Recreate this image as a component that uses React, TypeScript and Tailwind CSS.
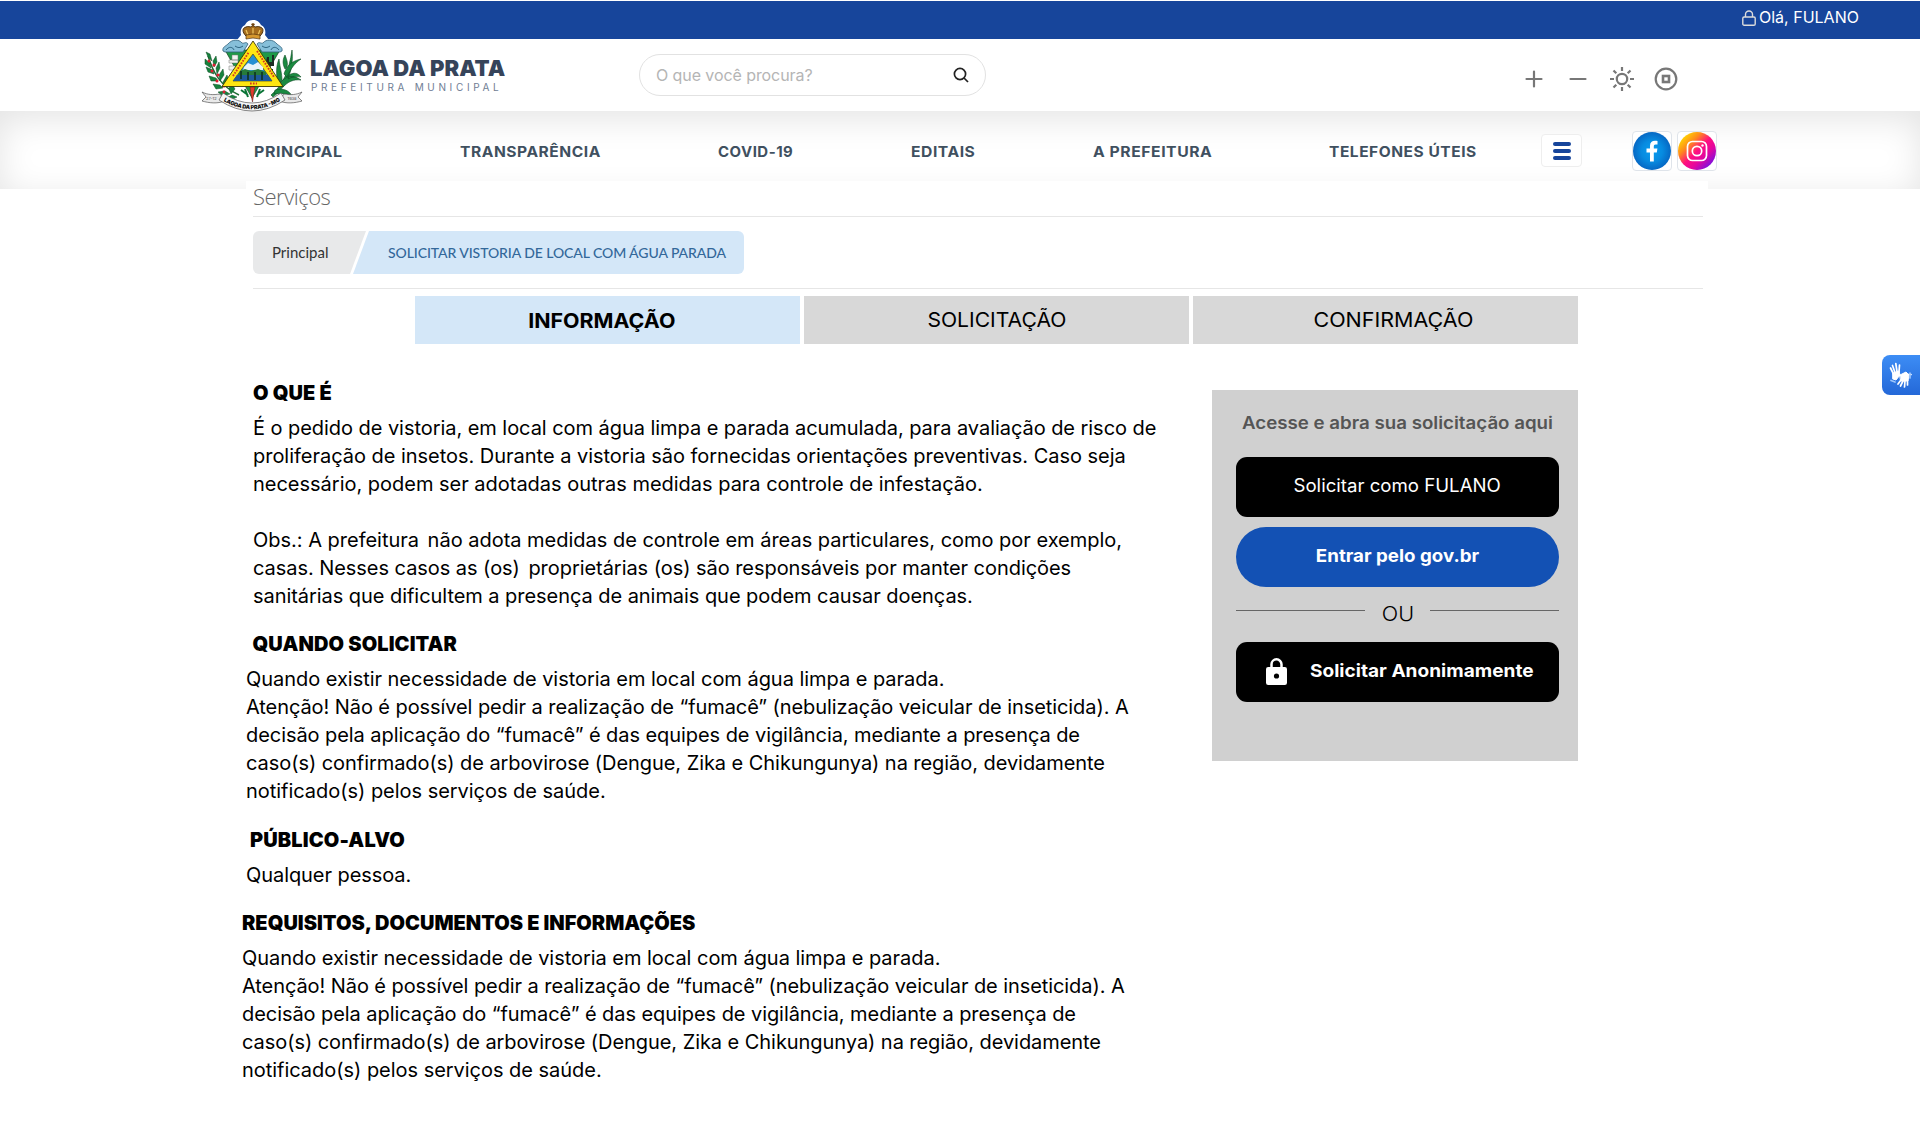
import React from "react";

function Emblem() {
  return (
    <svg viewBox="0 0 102 93" className="h-[93px] w-[102px]" aria-label="Brasão de Lagoa da Prata">
      <path d="M52 1c-5 0-7 3-8 5-4 2-5 6-4 10l-4 5c-5-1-10 1-13 6h58c-3-5-8-7-13-6l-4-5c1-4 0-8-4-10-1-2-3-5-8-5z" fill="#fff" />
      <path d="M24 31h55L51 79z" fill="#1f9a48" stroke="#173b1c" strokeWidth=".7" />
      <path d="M22 32c-1-4 3-5 5-7 4-5 11-5 14-1 2 1 4-2 6 1l-5 8H24z" fill="#86bfd9" stroke="#315f7a" strokeWidth=".8" />
      <path d="M81 32c1-4-3-5-5-7-4-5-11-5-14-1-2 1-4-2-6 1l5 8h18z" fill="#86bfd9" stroke="#315f7a" strokeWidth=".8" />
      <path d="M25 31c3-4 7-3 8 0M70 31c1-3 5-4 8 0M34 27c3 2 5 2 8 0M61 27c3 2 5 2 8 0" fill="none" stroke="#2d6581" />
      <path d="M31 36h6v5h-6zM28 41h9v3h-9zM28 47h8v4h-8z" fill="#f1f4ef" stroke="#777" strokeWidth=".5" />
      <path d="M66 38h2v5h3v-7h2v11h-9zM66 50h6v2h-6z" fill="#1b2c22" />
      <path d="M7 37c5 16 12 30 31 39" fill="none" stroke="#1f6c35" strokeWidth="1.4" />
      <g fill="#16833d" stroke="#0c4a22" strokeWidth=".5">
        <path d="M7 38l-2-5 4 2 2 7zM9 44l-5-4 0 5 6 4zM12 42l3-5 1 6-3 5zM12 51l-7-3 2 5 6 2zM15 49l3-6 1 6-3 6zM15 59l-7-2 2 5 7 0zM18 56l4-6 1 6-4 6zM19 66l-7-1 3 5 7-1zM22 63l4-7 2 7-5 5zM24 72l-7 1 5 4 7-2zM28 70l2-7 4 7-4 5zM31 76l-5 3 6 1 4-2z" />
      </g>
      <g fill="#e01c30"><circle cx="8" cy="42" r="1.500" /><circle cx="13" cy="46" r="1.600" /><circle cx="11" cy="52" r="1.500" /><circle cx="17" cy="56" r="1.600" /><circle cx="16" cy="62" r="1.500" /><circle cx="23" cy="67" r="1.600" /><circle cx="23" cy="73" r="1.400" /></g>
      <g fill="#1a8a40" stroke="#0c4a22" strokeWidth=".6">
        <path d="M70 76c12-10 18-24 21-45 2 18-4 36-19 47z" />
        <path d="M77 66c-2-11-2-19 1-26 1 9 3 15 3 21zM83 55c2-7 7-13 17-15-6 4-10 9-14 18zM78 65c6-8 14-10 22-4-8-1-13 2-18 7zM74 71c8-2 14 0 17 6-6-3-12-3-18-2zM84 50c-3-6-2-10 0-14 2 5 3 8 2 12zM88 56c5-3 9-2 12 2-5-1-9 0-13 2z" />
      </g>
      <path d="M52 22L82 67.500H21z" fill="#fde612" stroke="#3b3506" strokeWidth=".9" />
      <path d="M52 35L71 62H32z" fill="#258fd2" stroke="#4c4413" strokeWidth=".7" />
      <path d="M43 48l4-4 5 2 5-3 5 5v3H42z" fill="#e8f3f8" />
      <path d="M39 52l5-2 6 2 7-2 8 3v3H37z" fill="#267b3b" />
      <path d="M36 56h31l4 6H32z" fill="#1e599a" />
      <path d="M40 52v8M47 53v8M54 53v8M61 53v8" stroke="#103624" strokeWidth="1.700" />
      <g stroke="#d33a1f" strokeWidth="1.900" strokeDasharray="1.700 1.200" fill="none"><path d="M32 57l16-24M56 32l17 26M49 64.500h7" /></g>
      <path d="M49 68h5l-1 5-1.500 10-2-10z" fill="#e23b2e" stroke="#5e1a14" strokeWidth=".5" />
      <path d="M40 71l7 5M63 71l-7 5M44 70l3 8M59 70l-3 8" stroke="#0a7436" strokeWidth="2" />
      <path d="M45 17c-4-4-4-8 0-9 2-1 4 0 5 0 1-2 3-2 4 0 1 0 3-1 5 0 4 1 4 5 0 9z" fill="#a56c1d" stroke="#3d2508" strokeWidth=".9" />
      <path d="M47 16l-2-5M52 16V9M57 16l2-5" stroke="#efc55f" strokeWidth="1.200" />
      <path d="M52 8V4M50.300 5.300h3.400" stroke="#6f4310" strokeWidth="1.200" />
      <path d="M45 16q7-2 14 0v4q-7-2-14 0z" fill="#d6982f" stroke="#51300c" strokeWidth=".7" />
      <path d="M1 73c6 3 11 3 18 2l5 7c-8 3-16 2-23 0l4-4zM101 73c-6 3-11 3-18 2l-5 7c8 3 16 2 23 0l-4-4z" fill="#eaeaea" stroke="#555" strokeWidth=".7" />
      <path d="M22 74Q51 94 80 74L84 81Q51 103 18 81z" fill="#f6f6f6" stroke="#555" strokeWidth=".7" />
      <path id="motto" d="M20 80.500Q51 100 82 80.500" fill="none" />
      <text className="font-['Inter',sans-serif]" fontSize="5.600" fontWeight="900" fill="#111"><textPath href="#motto" startOffset="50%" textAnchor="middle" textLength="60">LAGOA DA PRATA - MG</textPath></text>
      <text x="5" y="80.500" fontSize="4" fill="#444" className="font-['Inter',sans-serif]">27-12</text>
      <text x="86.500" y="80.500" fontSize="4" fill="#444" className="font-['Inter',sans-serif]">1938</text>
    </svg>
  );
}

function Facebook() {
  return (
    <span className="flex h-10 w-10 items-center justify-center rounded border border-[#dfe4ea] bg-white">
      <svg viewBox="0 0 38 38" className="h-[38px] w-[38px] shrink-0">
        <defs><radialGradient id="fb"><stop offset="0" stopColor="#0a9df0" /><stop offset=".55" stopColor="#078be0" /><stop offset="1" stopColor="#0668c4" /></radialGradient></defs>
        <circle cx="19" cy="19" r="19" fill="url(#fb)" />
        <path d="M17 29.500V20.500h-3.500v-4H17v-2.800c0-3.300 2-5 5-5 1 0 1.800.1 2.500.2v3.700h-1.800c-1.500 0-1.900.8-1.900 1.900v2h3.600l-.6 4h-3v9z" fill="#fff" />
      </svg>
    </span>
  );
}

function Instagram() {
  return (
    <span className="flex h-10 w-10 items-center justify-center rounded border border-[#dfe4ea] bg-white">
      <svg viewBox="0 0 38 38" className="h-[38px] w-[38px] shrink-0">
        <defs><linearGradient id="ig" x1=".1" y1=".15" x2=".85" y2=".9"><stop offset="0" stopColor="#ffd600" /><stop offset=".25" stopColor="#ff8a1c" /><stop offset=".5" stopColor="#ff0f80" /><stop offset=".72" stopColor="#e3069f" /><stop offset="1" stopColor="#7b10e0" /></linearGradient></defs>
        <circle cx="19" cy="19" r="19" fill="url(#ig)" />
        <rect x="9.500" y="9.500" width="19" height="19" rx="5" fill="none" stroke="#fff" strokeWidth="1.700" />
        <circle cx="19" cy="19" r="4.700" fill="none" stroke="#fff" strokeWidth="1.700" />
        <circle cx="24.500" cy="13.500" r="1.200" fill="#fff" />
      </svg>
    </span>
  );
}

const fumace = (
  <>
    <span className="block tracking-[-0.034px]">Quando existir necessidade de vistoria em local com água limpa e parada.</span>
    <span className="block tracking-[-0.079px]">Atenção! Não é possível pedir a realização de “fumacê” (nebulização veicular de inseticida). A</span>
    <span className="block tracking-[-0.068px]">decisão pela aplicação do “fumacê” é das equipes de vigilância, mediante a presença de</span>
    <span className="block tracking-[-0.056px]">caso(s) confirmado(s) de arbovirose (Dengue, Zika e Chikungunya) na região, devidamente</span>
    <span className="block tracking-[-0.03px]">notificado(s) pelos serviços de saúde.</span>
  </>
);

export default function App() {
  return (
    <div className="relative flex h-[1121px] w-[1920px] flex-col overflow-hidden bg-white font-['Inter',sans-serif] text-black">
      <div className="mt-px flex h-[38px] shrink-0 items-start justify-end bg-[#17459b] pr-[61px] text-white">
        <svg viewBox="0 0 14 16" className="mt-[9px] mr-[3px] h-4 w-[14px]" fill="none" stroke="#dcdcdc" strokeWidth="1.400">
          <rect x=".8" y="7" width="12.400" height="8.200" rx="1.300" /><path d="M3.500 7V4.500a3.500 3.500 0 0 1 7 0V7" />
        </svg>
        <span className="mt-1 w-[100px] text-base leading-6 whitespace-nowrap">Olá, FULANO</span>
      </div>

      <header className="flex h-[72px] shrink-0">
        <div className="z-10 -mt-5 ml-[201px] w-[102px] shrink-0"><Emblem /></div>
        <div className="ml-[7px] w-[329px] shrink-0 pt-4">
          <div className="text-[22px] leading-[26px] font-black whitespace-nowrap text-[#36445a]">LAGOA DA PRATA</div>
          <div className="ml-px text-[10px] leading-3 tracking-[3.650px] whitespace-nowrap text-[#6f7d94]">PREFEITURA MUNICIPAL</div>
        </div>
        <div className="mt-[15px] flex h-[42px] w-[347px] shrink-0 items-center justify-between rounded-full border-[1.500px] border-[#e2e2e2] px-4">
          <span className="text-base tracking-[-0.080px] whitespace-nowrap text-[#b5b5b5]">O que você procura?</span>
          <svg viewBox="0 0 16 16" className="h-4 w-4" fill="none" stroke="#222" strokeWidth="1.700"><circle cx="7" cy="7" r="5.600" /><path d="M11 11l4 4" /></svg>
        </div>
        <div className="mt-[28px] ml-[536px] flex h-6 items-center gap-5 text-[#777]">
          {["M4.500 12h15M12 4.500v15", "M4.500 12h15"].map((d) => (
            <svg key={d} viewBox="0 0 24 24" className="h-6 w-6" fill="none" stroke="currentColor" strokeWidth="2.200" strokeLinecap="round"><path d={d} /></svg>
          ))}
          <svg viewBox="0 0 24 24" className="h-6 w-6" fill="none" stroke="currentColor" strokeWidth="2.200"><circle cx="12" cy="12" r="5.200" /><path d="M12 0v4M12 20v4M0 12h4M20 12h4M3.500 3.500l2.800 2.800M17.700 17.700l2.800 2.800M3.500 20.500l2.800-2.800M17.700 6.300l2.800-2.800" /></svg>
          <svg viewBox="0 0 24 24" className="h-6 w-6" fill="none" stroke="currentColor" strokeWidth="2.200"><circle cx="12" cy="12" r="10.300" /><rect x="9" y="9" width="6" height="6" strokeWidth="2.600" /></svg>
        </div>
      </header>

      <nav className="flex h-[78px] shrink-0 items-start pl-[254px] text-[14.500px] leading-5 font-bold whitespace-nowrap text-[#40505f] shadow-[inset_0_8px_34px_rgba(0,0,0,0.11)]">
        <div className="flex gap-[118px] pt-[31px] tracking-[0.500px] [&>span]:origin-left">
          <span className="w-[88px] scale-x-[1.100]">PRINCIPAL</span>
          <span className="w-[140px] scale-x-[1.075]">TRANSPARÊNCIA</span>
          <span className="w-[75px] scale-x-[1.030]">COVID-19</span>
          <span className="w-[64px] scale-x-[1.080]">EDITAIS</span>
          <span className="w-[118px] scale-x-[1.085]">A PREFEITURA</span>
          <span className="w-[148px] scale-x-[1.070]">TELEFONES ÚTEIS</span>
        </div>
        <div className="mt-[23px] ml-[64px] flex h-[33px] w-[41px] flex-col items-center justify-center gap-[3px] rounded border border-[#eee] bg-white pt-px">
          <i className="h-[4px] w-[18px] rounded-sm bg-[#17459b]" />
          <i className="h-[4px] w-[18px] rounded-sm bg-[#17459b]" />
          <i className="h-[4px] w-[18px] rounded-sm bg-[#17459b]" />
        </div>
        <div className="mt-5 ml-[50px] flex gap-[5px]"><Facebook /><Instagram /></div>
      </nav>

      <main className="relative -mt-2 ml-[246px] w-[1462px] grow bg-white pl-[7px]">
        <h1 className="h-9 w-[1450px] border-b border-[#e6e6e6] font-['Open_Sans',sans-serif] text-[22px] leading-[30px] font-light tracking-[-0.500px] text-[#666]">Serviços</h1>
        <div className="flex h-[72px] w-[1450px] border-b border-[#e6e6e6] pt-[14px] font-['Lato',sans-serif]">
          <div className="flex h-[43px] w-[113px] items-center rounded-l-md bg-[#e8e9ea] pl-[19px] text-[15px] text-[#333] [clip-path:polygon(0_0,100%_0,97px_100%,0_100%)]">Principal</div>
          <div className="-ml-[13px] flex h-[43px] w-[391px] items-center rounded-r-md bg-[#d4e7f8] pl-[35px] text-[14px] font-medium tracking-[-0.080px] whitespace-nowrap text-[#33689a] [clip-path:polygon(16px_0,100%_0,100%_100%,0_100%)]">SOLICITAR VISTORIA DE LOCAL COM ÁGUA PARADA</div>
        </div>

        <div className="mt-[7px] ml-[162px] flex gap-1 text-xl">
          <div className="flex h-12 w-[385px] items-center justify-center bg-[#d4e7f8] pt-[2px] pr-[12px] font-bold"><span className="scale-x-[1.070]">INFORMAÇÃO</span></div>
          <div className="flex h-12 w-[385px] items-center justify-center bg-[#d8d8d8]"><span className="scale-x-[1.055]">SOLICITAÇÃO</span></div>
          <div className="flex h-12 w-[385px] items-center justify-center bg-[#d8d8d8] pl-[16px]"><span className="scale-x-[1.074]">CONFIRMAÇÃO</span></div>
        </div>

        <div className="flex">
          <article className="-ml-[11px] w-[970px] shrink-0 pt-[35px] text-xl leading-7 whitespace-nowrap [&_h2]:font-black">
            <h2 className="ml-[11px] tracking-[0.100px]">O QUE É</h2>
            <p className="mt-[7px] ml-[11px]">
              <span className="block tracking-[-0.052px]">É o pedido de vistoria, em local com água limpa e parada acumulada, para avaliação de risco de</span>
              <span className="block tracking-[-0.026px]">proliferação de insetos. Durante a vistoria são fornecidas orientações preventivas. Caso seja</span>
              <span className="block tracking-[-0.014px]">necessário, podem ser adotadas outras medidas para controle de infestação.</span>
              <br />
              <span className="block tracking-[-0.013px]">Obs.: A prefeitura <span className="ml-[3px]">não adota medidas de controle em áreas particulares, como por exemplo,</span></span>
              <span className="block tracking-[-0.050px]">casas. Nesses casos as (os) <span className="ml-[3px]">proprietárias (os) são responsáveis por manter condições</span></span>
              <span className="block tracking-[-0.050px]">sanitárias que dificultem a presença de animais que podem causar doenças.</span>
            </p>
            <h2 className="mt-[20px] ml-[10.500px] tracking-[0.100px]">QUANDO SOLICITAR</h2>
            <p className="mt-[7px] ml-1">{fumace}</p>
            <h2 className="mt-[21px] ml-[8px] tracking-[0.130px]">PÚBLICO-ALVO</h2>
            <p className="mt-[7px] ml-1 tracking-[-0.070px]">Qualquer pessoa.</p>
            <h2 className="mt-[20px] tracking-[0.010px]">REQUISITOS, DOCUMENTOS E INFORMAÇÕES</h2>
            <p className="mt-[7px]">{fumace}</p>
          </article>

          <aside className="mt-[46px] flex h-[371px] w-[366px] shrink-0 flex-col bg-[#d0d0d0] px-6">
            <h3 className="mt-[21px] ml-[5px] scale-x-[1.100] text-center text-[17px] leading-6 font-semibold whitespace-nowrap text-[#555]">Acesse e abra sua solicitação aqui</h3>
            <button className="mt-[22px] h-[60px] w-[323px] rounded-[11px] bg-black pb-[2px] text-lg text-white"><span className="inline-block scale-x-[1.035]">Solicitar como FULANO</span></button>
            <button className="mt-[10px] h-[60px] w-[323px] rounded-full bg-[#1351b4] pb-[2px] text-lg font-bold text-white"><span className="inline-block scale-x-[1.040]">Entrar pelo gov.br</span></button>
            <div className="mt-[12px] flex h-[30px] w-[323px] items-center justify-between text-xl font-light">
              <i className="mb-[8px] h-px w-[129px] bg-[#666]" />
              <span className="scale-x-[1.080]">OU</span>
              <i className="mb-[8px] h-px w-[129px] bg-[#666]" />
            </div>
            <button className="mt-[13px] flex h-[60px] w-[323px] items-center rounded-[11px] bg-black pl-[30px] text-lg font-bold text-white">
              <svg viewBox="0 0 21 27" className="mb-px h-[27px] w-[21px]"><path d="M5.500 10V6.300a5 5 0 0 1 10 0V10" fill="none" stroke="#fff" strokeWidth="2.500" /><rect y="9" width="21" height="18" rx="2.200" fill="#fff" /><circle cx="10.500" cy="18" r="2.600" /></svg>
              <span className="mb-[2px] ml-[23px] origin-left scale-x-[1.060] whitespace-nowrap">Solicitar Anonimamente</span>
            </button>
          </aside>
        </div>
      </main>

      <div className="absolute top-[355px] right-0 flex h-10 w-[38px] items-center justify-center rounded-l-lg bg-gradient-to-b from-[#3d8df5] to-[#2468d8]">
        <svg viewBox="0 0 24 26" className="h-[26px] w-6" fill="none" stroke="#fff" strokeLinecap="round" strokeWidth="1.700">
          <path d="M4.500 12L1.500 6M6 10.500L3.500 3.500M8 9.500L6.800 1.500M10 10l.5-7" />
          <path d="M4 11l6-2 1 4-4 5-3-1z" fill="#fff" strokeWidth="1" />
          <path d="M2 18.500l4 1.500" stroke="#9cc5fb" />
          <path d="M12 18l-3 4M14 19l-2.500 5M16 19l-.5 6M18.500 18l0 5M11 13.500l-3-1M18 12.500h4" />
          <path d="M11 13l6-3 3 3-1 6-7 0z" fill="#fff" strokeWidth="1" />
          <path d="M21 11v5" stroke="#9cc5fb" />
        </svg>
      </div>
    </div>
  );
}
